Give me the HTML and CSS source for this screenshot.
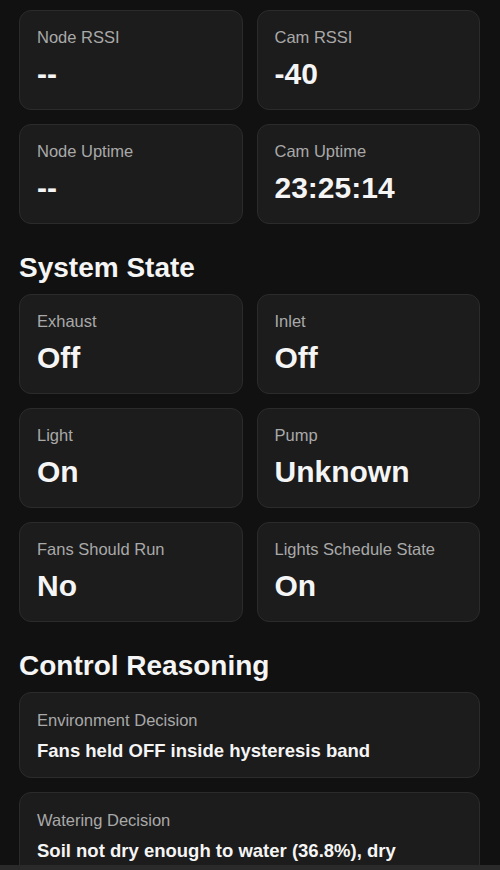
FILE: index.html
```html
<!DOCTYPE html>
<html lang="en">
<head>
<meta charset="utf-8">
<title>Status</title>
<link rel="stylesheet" href="styles.css">
</head>
<body>
<main class="page">
  <section class="grid">
    <div class="card"><div class="label">Node RSSI</div><div class="value">--</div></div>
    <div class="card"><div class="label">Cam RSSI</div><div class="value">-40</div></div>
    <div class="card"><div class="label">Node Uptime</div><div class="value">--</div></div>
    <div class="card"><div class="label">Cam Uptime</div><div class="value">23:25:14</div></div>
  </section>

  <h2 class="heading">System State</h2>
  <section class="grid">
    <div class="card"><div class="label">Exhaust</div><div class="value">Off</div></div>
    <div class="card"><div class="label">Inlet</div><div class="value">Off</div></div>
    <div class="card"><div class="label">Light</div><div class="value">On</div></div>
    <div class="card"><div class="label">Pump</div><div class="value">Unknown</div></div>
    <div class="card"><div class="label">Fans Should Run</div><div class="value">No</div></div>
    <div class="card"><div class="label">Lights Schedule State</div><div class="value">On</div></div>
  </section>

  <h2 class="heading">Control Reasoning</h2>
  <section class="list">
    <div class="card decision"><div class="label">Environment Decision</div><div class="text">Fans held OFF inside hysteresis band</div></div>
    <div class="card decision"><div class="label">Watering Decision</div><div class="text">Soil not dry enough to water (36.8%), dry threshold 30.0%</div></div>
  </section>
</main>
<div class="bottom-bar"></div>
</body>
</html>
```

FILE: styles.css
```css
html, body {
  margin: 0;
  padding: 0;
  background: #111111;
  color: #ffffff;
  font-family: "Liberation Sans", Arial, sans-serif;
  height: 870px;
  overflow: hidden;
}

.page {
  padding: 10px 20px 0 19px;
}

.grid {
  display: grid;
  grid-template-columns: 1fr 1fr;
  gap: 14px;
}

.list {
  display: flex;
  flex-direction: column;
  gap: 14px;
}

.card {
  background: #1c1c1c;
  border: 1px solid #2b2b2b;
  border-radius: 12px;
  padding: 17px 17px 16px;
  height: 100px;
  box-sizing: border-box;
}

.label {
  font-size: 16.5px;
  color: #a9a9a9;
  line-height: 19px;
  margin-bottom: 10px;
}

.value {
  font-size: 30px;
  font-weight: 700;
  line-height: 34px;
  color: #f5f5f5;
}

.heading {
  font-size: 28px;
  font-weight: 700;
  line-height: 32px;
  margin: 28px 0 10px;
  color: #f5f5f5;
}

.card.decision {
  height: auto;
  padding: 18px 17px 15px;
}

.decision .label {
  margin-bottom: 10px;
}

.text {
  font-size: 18.5px;
  font-weight: 700;
  line-height: 22px;
  color: #f5f5f5;
}

.bottom-bar {
  position: fixed;
  left: 0;
  right: 0;
  bottom: 0;
  height: 5px;
  background: #2a2a2a;
}
```
